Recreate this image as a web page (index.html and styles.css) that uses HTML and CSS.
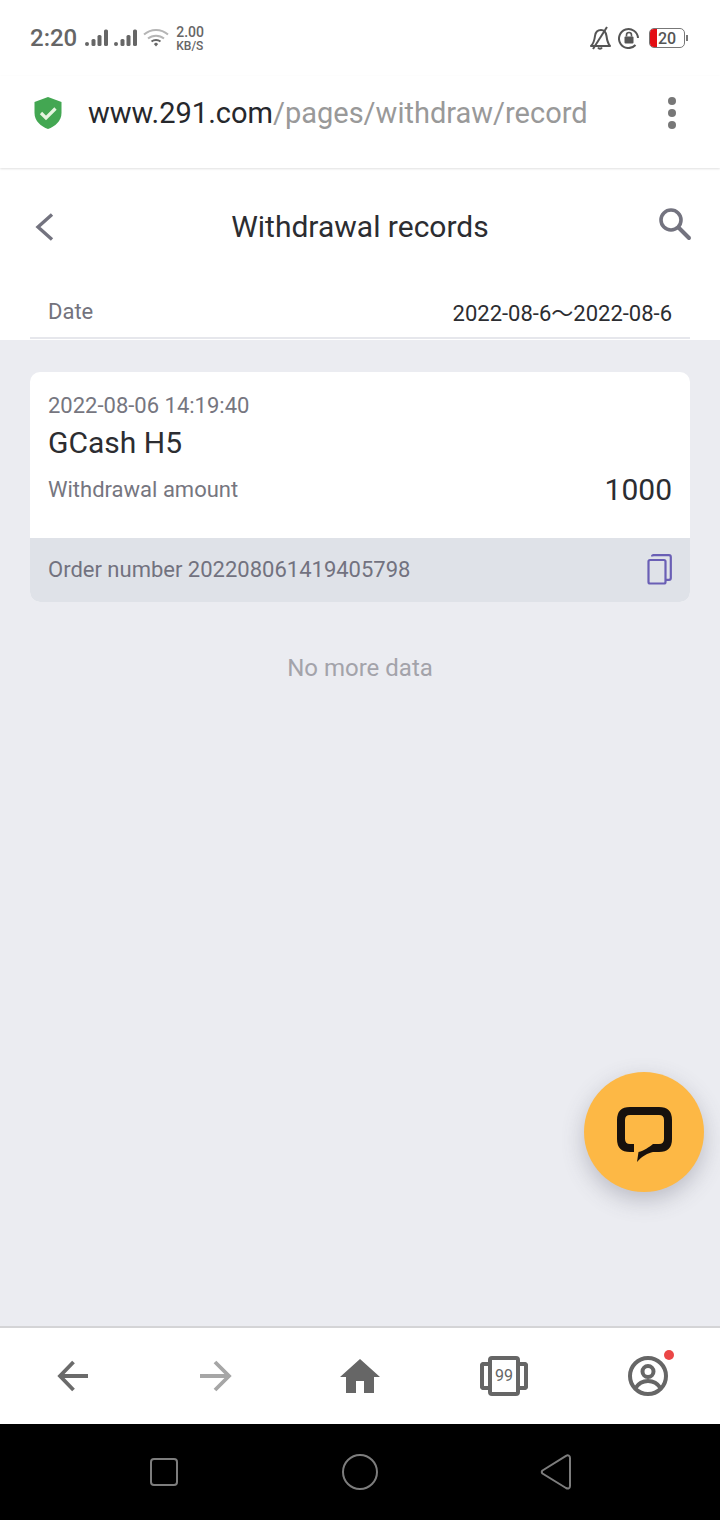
FILE: index.html
```html
<!DOCTYPE html>
<html lang="en">
<head>
    <meta charset="UTF-8">
    <meta name="viewport" content="width=device-width, initial-scale=1.0">
    <title>Withdrawal records</title>
    <link rel="stylesheet" href="styles.css">
</head>
<body>
    <div class="phone">
        <div class="status-bar">
            <span class="clock">2:20</span>
            <svg class="signal" width="24" height="18" viewBox="0 0 24 18">
                <circle cx="2" cy="15" r="2" fill="#666"/>
                <rect x="6.500" y="10" width="4" height="7" rx="1.500" fill="#666"/>
                <rect x="12.500" y="6" width="4" height="11" rx="1.500" fill="#666"/>
                <rect x="19" y="0.500" width="4" height="16.500" rx="1.500" fill="#666"/>
            </svg>
            <svg class="signal" width="24" height="18" viewBox="0 0 24 18">
                <circle cx="2" cy="15" r="2" fill="#666"/>
                <rect x="6.500" y="10" width="4" height="7" rx="1.500" fill="#666"/>
                <rect x="12.500" y="6" width="4" height="11" rx="1.500" fill="#666"/>
                <rect x="19" y="0.500" width="4" height="16.500" rx="1.500" fill="#666"/>
            </svg>
            <svg class="wifi" width="26" height="20" viewBox="0 0 26 20">
                <path d="M1 6.500C8 0.500 18 0.500 25 6.500" fill="none" stroke="#b5b5b5" stroke-width="2"/>
                <path d="M5 10.500C9.500 6.700 16.500 6.700 21 10.500" fill="none" stroke="#b5b5b5" stroke-width="2"/>
                <path d="M8.500 13.500C11 11.600 15 11.600 17.500 13.500" fill="none" stroke="#666" stroke-width="2"/>
                <path d="M10.800 16L13 14.600L15.200 16L13 18.500Z" fill="#666"/>
            </svg>
            <div class="speed"><span>2.00</span><span class="speed-unit">KB/S</span></div>
            <div class="status-right">
                <svg width="24" height="24" viewBox="0 0 24 24">
                    <path d="M3 20C6 17 6.500 14 7 10C7.500 6 10 4 13 4C16 4 18 6.500 18.500 10C19 14 19.500 17 22 20Z" fill="none" stroke="#555" stroke-width="2" stroke-linejoin="round"/>
                    <path d="M10 21.500C11 23 13 23 14 21.500" fill="none" stroke="#555" stroke-width="2"/>
                    <path d="M5 23L19 1" stroke="#555" stroke-width="2"/>
                </svg>
                <svg width="22" height="22" viewBox="0 0 22 22">
                    <path d="M20 11A9.500 9.500 0 1 0 17.500 18" fill="none" stroke="#555" stroke-width="2"/>
                    <rect x="6.500" y="9.500" width="9" height="7" rx="1" fill="#555"/>
                    <path d="M8.500 9.500V8A2.500 2.500 0 0 1 13.500 8V9.500" fill="none" stroke="#555" stroke-width="1.600"/>
                </svg>
                <div class="battery">
                    <div class="battery-level"></div>
                    <span class="battery-text">20</span>
                    <div class="battery-tip"></div>
                </div>
            </div>
        </div>

        <div class="url-bar">
            <svg class="shield" width="30" height="34" viewBox="0 0 30 34">
                <path d="M15 1L28.500 6V17C28.500 25 22 30.500 15 33C8 30.500 1.500 25 1.500 17V6Z" fill="#43a752"/>
                <path d="M8 17L13 22L22.500 12.500" fill="none" stroke="#e6f5e0" stroke-width="3.200"/>
            </svg>
            <div class="url"><span class="url-host">www.291.com</span>/pages/withdraw/record</div>
            <div class="more-dots"><i></i><i></i><i></i></div>
        </div>

        <div class="page">
            <div class="top-panel">
                <div class="page-header">
                    <svg class="back-icon" width="22" height="32" viewBox="0 0 22 32">
                        <path d="M19 3.500L5 16L19 28.500" fill="none" stroke="#73737f" stroke-width="3.400"/>
                    </svg>
                    <h1>Withdrawal records</h1>
                    <svg class="search-icon" width="34" height="34" viewBox="0 0 34 34">
                        <circle cx="13" cy="13" r="10" fill="none" stroke="#73737f" stroke-width="3.600"/>
                        <path d="M21 21L31 31" stroke="#73737f" stroke-width="4" stroke-linecap="round"/>
                    </svg>
                </div>
                <div class="date-row">
                    <span class="date-label">Date</span>
                    <span class="date-value">2022-08-6～2022-08-6</span>
                </div>
            </div>

            <div class="record-card">
                <div class="record-body">
                    <div class="record-time">2022-08-06 14:19:40</div>
                    <div class="record-name">GCash H5</div>
                    <div class="record-amount-row">
                        <span class="record-amount-label">Withdrawal amount</span>
                        <span class="record-amount">1000</span>
                    </div>
                </div>
                <div class="record-footer">
                    <span>Order number 202208061419405798</span>
                    <svg width="26" height="32" viewBox="0 0 26 32">
                        <path d="M6 2.500C6 1.800 6.500 1.200 7.500 1.200H23C24 1.200 24.800 2 24.800 3V24C24.800 25 24 25.800 23 25.800H19.500" fill="none" stroke="#6a5fb5" stroke-width="2.200"/>
                        <rect x="2.500" y="6" width="17" height="23.500" rx="1.500" fill="none" stroke="#6a5fb5" stroke-width="2.200"/>
                    </svg>
                </div>
            </div>

            <div class="no-more">No more data</div>

            <div class="chat-button">
                <svg width="58" height="58" viewBox="0 0 58 58">
                    <path d="M19 42H15C9 42 6 39 6 33V14C6 8 9 5 15 5H44C50 5 53 8 53 14V33C53 39 50 42 44 42H38" fill="none" stroke="#17110d" stroke-width="8"/>
                    <path d="M22 56L23.500 46C29 45 34 41 38 38H42V46H38C33 47 27 50 22 56Z" fill="#17110d"/>
                </svg>
            </div>
        </div>

        <div class="bottom-nav">
            <svg width="36" height="36" viewBox="0 0 36 36">
                <path d="M34 18H6M19.500 4L6 18L19.500 32" fill="none" stroke="#6b6b6b" stroke-width="3.800"/>
            </svg>
            <svg width="36" height="36" viewBox="0 0 36 36">
                <path d="M2 18H31M17 4L31 18L17 32" fill="none" stroke="#a6a6a6" stroke-width="3.800"/>
            </svg>
            <svg width="40" height="36" viewBox="0 0 40 36">
                <path d="M20 1L40 19H34V35H24V23H16V35H6V19H0Z" fill="#666"/>
            </svg>
            <div class="tabs-icon">
                <div class="tabs-side tabs-left"></div>
                <div class="tabs-main">99</div>
                <div class="tabs-side tabs-right"></div>
            </div>
            <div class="profile-icon">
                <svg width="40" height="40" viewBox="0 0 40 40">
                    <circle cx="20" cy="20" r="18" fill="none" stroke="#666" stroke-width="4"/>
                    <circle cx="20" cy="15.500" r="5.500" fill="none" stroke="#666" stroke-width="4"/>
                    <path d="M7.500 32C11 26.500 15 25 20 25C25 25 29 26.500 32.500 32" fill="none" stroke="#666" stroke-width="4"/>
                </svg>
                <div class="notify-dot"></div>
            </div>
        </div>

        <div class="system-nav">
            <svg width="32" height="32" viewBox="0 0 32 32">
                <rect x="3" y="3" width="26" height="26" rx="3" fill="none" stroke="#7d7d7d" stroke-width="2"/>
            </svg>
            <svg width="38" height="38" viewBox="0 0 38 38">
                <circle cx="19" cy="19" r="17" fill="none" stroke="#7d7d7d" stroke-width="2"/>
            </svg>
            <svg width="32" height="36" viewBox="0 0 32 36">
                <path d="M2.500 16.500L26 1.800C28 0.800 30 1.500 30 4V32C30 34.500 28 35 26 34L2.500 19.500C1.500 18.500 1.500 17.500 2.500 16.500Z" fill="none" stroke="#7d7d7d" stroke-width="2"/>
            </svg>
        </div>
    </div>
</body>
</html>
```

FILE: styles.css
```css
* {
    box-sizing: border-box;
}
body {
    margin: 0;
    font-family: Roboto, "Noto Sans CJK SC", "Liberation Sans", sans-serif;
    background-color: #fff;
}
.phone {
    width: 720px;
    height: 1520px;
    display: flex;
    flex-direction: column;
    overflow: hidden;
}

/* status bar */
.status-bar {
    height: 76px;
    flex-shrink: 0;
    display: flex;
    align-items: center;
    padding: 0 35px 0 30px;
    color: #666;
}
.clock {
    font-size: 24px;
    font-weight: 500;
    margin-right: 8px;
}
.signal {
    margin-right: 5px;
}
.wifi {
    margin: 0 7px 0 0;
}
.speed {
    display: flex;
    flex-direction: column;
    font-size: 14px;
    line-height: 14px;
    font-weight: 500;
    margin-top: 2px;
}
.speed-unit {
    font-size: 12px;
}
.status-right {
    margin-left: auto;
    display: flex;
    align-items: center;
    gap: 6px;
}
.battery {
    position: relative;
    width: 36px;
    height: 20px;
    margin-left: 3px;
    border: 1px solid #777;
    border-radius: 5px;
    display: flex;
    align-items: center;
}
.battery-level {
    width: 7px;
    height: 18px;
    background-color: #e30d12;
    border-radius: 4px 0 0 4px;
}
.battery-text {
    font-size: 16px;
    font-weight: 500;
    color: #555;
    margin-left: 1px;
}
.battery-tip {
    position: absolute;
    right: -4px;
    top: 6px;
    width: 2px;
    height: 6px;
    background-color: #777;
}

/* url bar */
.url-bar {
    height: 92px;
    flex-shrink: 0;
    display: flex;
    align-items: center;
    padding: 0 0 19px 33px;
    position: relative;
    z-index: 1;
    box-shadow: 0 1px 2px rgba(0, 0, 0, 0.12);
    background-color: #fff;
}
.shield {
    margin-right: 25px;
}
.url {
    font-size: 29px;
    color: #999;
}
.url-host {
    color: #26282c;
}
.more-dots {
    margin-left: auto;
    margin-right: 44px;
    display: flex;
    flex-direction: column;
    gap: 4px;
}
.more-dots i {
    width: 8px;
    height: 8px;
    border-radius: 50%;
    background-color: #777;
}

/* page */
.page {
    flex: 1;
    position: relative;
    background-color: #ebecf1;
}
.top-panel {
    background-color: #fff;
    padding: 0 30px;
    height: 172px;
}
.page-header {
    height: 120px;
    display: grid;
    grid-template-columns: 1fr auto 1fr;
    align-items: center;
    padding-bottom: 3px;
}
.page-header h1 {
    margin: 0;
    font-size: 30px;
    font-weight: 400;
    color: #2c2d31;
}
.back-icon {
    margin-left: 3px;
}
.search-icon {
    justify-self: end;
    margin-right: -2px;
    margin-bottom: 6px;
}
.date-row {
    height: 51px;
    display: flex;
    justify-content: space-between;
    align-items: center;
    padding: 0 18px;
    border-bottom: 2px solid #e6e7ec;
}
.date-label {
    font-size: 22px;
    color: #73737d;
    margin-bottom: 2px;
}
.date-value {
    font-size: 22px;
    line-height: 26px;
    color: #2c2d31;
    margin-top: 2px;
}

/* record card */
.record-card {
    margin: 32px 30px 0;
    border-radius: 10px;
    overflow: hidden;
    background-color: #fff;
}
.record-body {
    height: 166px;
    padding: 20px 18px 0;
}
.record-time {
    font-size: 22px;
    line-height: 28px;
    color: #76767f;
}
.record-name {
    font-size: 30px;
    line-height: 36px;
    margin-top: 5px;
    color: #2c2d31;
}
.record-amount-row {
    display: flex;
    justify-content: space-between;
    align-items: center;
    margin-top: 8px;
    height: 40px;
}
.record-amount-label {
    font-size: 22px;
    color: #76767f;
}
.record-amount {
    font-size: 30px;
    color: #2c2d31;
}
.record-footer {
    height: 64px;
    display: flex;
    justify-content: space-between;
    align-items: center;
    padding: 0 18px;
    font-size: 22px;
    color: #72727f;
    background-color: #dfe2e8;
}
.record-footer span {
    margin-bottom: 2px;
}
.no-more {
    margin-top: 51px;
    text-align: center;
    font-size: 24px;
    line-height: 30px;
    color: #a3a3aa;
}

/* floating chat */
.chat-button {
    position: absolute;
    left: 584px;
    top: 904px;
    width: 120px;
    height: 120px;
    border-radius: 50%;
    background-color: #fdb845;
    box-shadow: 0 8px 22px rgba(80, 80, 100, 0.3);
    display: flex;
    align-items: center;
    justify-content: center;
    padding-top: 6px;
}

/* bottom nav */
.bottom-nav {
    height: 98px;
    flex-shrink: 0;
    display: grid;
    grid-template-columns: repeat(5, 144px);
    justify-items: center;
    align-items: center;
    background-color: #fff;
    border-top: 2px solid #d4d4d6;
}
.tabs-icon {
    display: flex;
    align-items: center;
}
.tabs-side {
    width: 8px;
    height: 28px;
    border: 4px solid #666;
}
.tabs-left {
    border-right: none;
    border-radius: 4px 0 0 4px;
}
.tabs-right {
    border-left: none;
    border-radius: 0 4px 4px 0;
}
.tabs-main {
    width: 32px;
    height: 40px;
    border: 4px solid #666;
    border-radius: 4px;
    font-size: 16px;
    line-height: 32px;
    text-align: center;
    color: #666;
}
.profile-icon {
    position: relative;
    height: 40px;
}
.notify-dot {
    position: absolute;
    right: -6px;
    top: -6px;
    width: 10px;
    height: 10px;
    border-radius: 50%;
    background-color: #eb4646;
}

/* android nav */
.system-nav {
    height: 96px;
    flex-shrink: 0;
    display: grid;
    grid-template-columns: 328px 64px 328px;
    justify-items: center;
    align-items: center;
    background-color: #000;
}
.system-nav svg:first-child {
    justify-self: end;
    margin-right: 148px;
}
.system-nav svg:last-child {
    justify-self: start;
    margin-left: 148px;
}
```
